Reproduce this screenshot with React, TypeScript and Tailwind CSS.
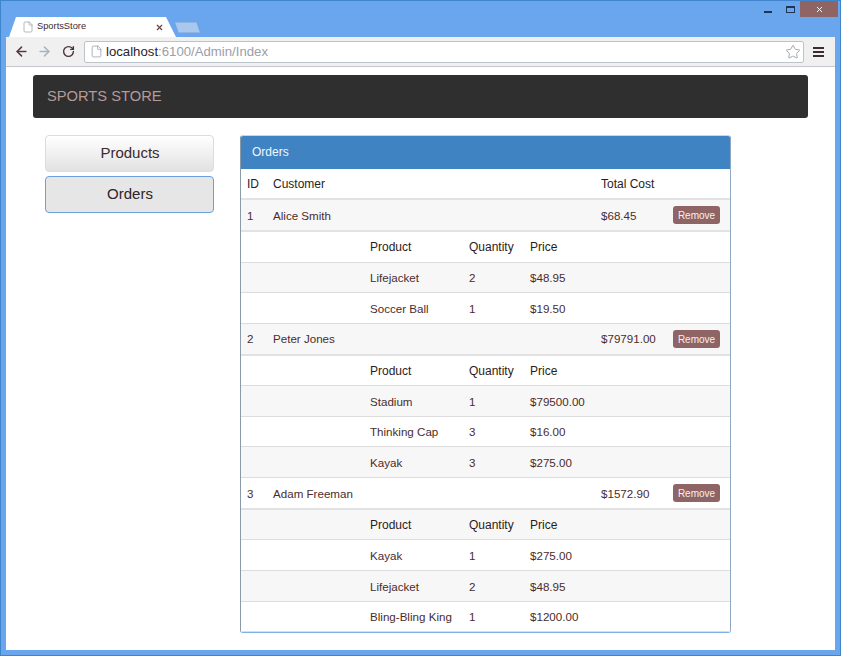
import React from 'react';
import { ArrowLeft, ArrowRight, RotateCw, Star, File, X } from 'lucide-react';

type Item = { name: string; qty: number; price: string };
type Order = { id: number; customer: string; total: string; items: Item[] };

const orders: Order[] = [
    {
        id: 1, customer: 'Alice Smith', total: '$68.45',
        items: [
            { name: 'Lifejacket', qty: 2, price: '$48.95' },
            { name: 'Soccer Ball', qty: 1, price: '$19.50' },
        ],
    },
    {
        id: 2, customer: 'Peter Jones', total: '$79791.00',
        items: [
            { name: 'Stadium', qty: 1, price: '$79500.00' },
            { name: 'Thinking Cap', qty: 3, price: '$16.00' },
            { name: 'Kayak', qty: 3, price: '$275.00' },
        ],
    },
    {
        id: 3, customer: 'Adam Freeman', total: '$1572.90',
        items: [
            { name: 'Kayak', qty: 1, price: '$275.00' },
            { name: 'Lifejacket', qty: 2, price: '$48.95' },
            { name: 'Bling-Bling King', qty: 1, price: '$1200.00' },
        ],
    },
];

const rowGrid = 'grid grid-cols-[32px_97px_99px_61px_71px_72px_1fr] items-center pt-[1px] text-[11.6px] text-[#4a2c2c]';
const headCell = 'text-[12px] text-[#2a1c1c]';
const stripe = (n: number) => (n % 2 === 0 ? 'bg-[#f7f7f7]' : 'bg-white');

const App = () => {
    // rows are striped across the whole table body, nested rows included
    let rowIndex = -1;

    return (
        <div className="w-[841px] h-[656px] flex flex-col bg-[#69a6ee] border border-[#3f85cc] font-['Liberation_Sans',Arial,sans-serif] overflow-hidden">
            {/* Title bar with tab */}
            <div className="relative h-[36px] shrink-0 flex items-end pl-[8px]">
                <div className="relative w-[167px] h-[20px] bg-white rounded-t-[4px] flex items-center pl-[13px] pr-[12px] [clip-path:polygon(0_100%,7px_0,157px_0,100%_100%)]">
                    <File size={12} className="text-[#9aa3ad]" strokeWidth={1.5} />
                    <span className="ml-[3px] flex-1 text-[9.3px] text-[#3a2c2c]">SportsStore</span>
                    <X size={9} className="text-[#6b3a3a]" strokeWidth={3} />
                </div>
                <div className="w-[25px] h-[11px] mb-[4px] -ml-[1px] bg-[#a9c8ee] border border-[#8fb4e4] [clip-path:polygon(0_0,85%_0,100%_100%,15%_100%)]"></div>
                {/* Window controls */}
                <div className="absolute top-[10px] left-[763px] w-[8px] h-[2px] bg-[#1f3554]"></div>
                <div className="absolute top-[5px] left-[785px] w-[9px] h-[7px] border border-[#1f3554] border-t-2 bg-[#69a6ee]"></div>
                <div className="absolute top-0 left-[799px] w-[38px] h-[16px] bg-[#8f6464] flex items-center justify-center">
                    <X size={9} className="text-white" strokeWidth={2.5} />
                </div>
            </div>

            {/* Browser window */}
            <div className="flex-1 mx-[5px] mb-[5px] flex flex-col min-h-0 bg-white">
                <div className="h-[30px] shrink-0 flex items-center bg-[#f0f0f0] border-b border-[#c4c8cc] pl-[8px] pr-[8px]">
                    <ArrowLeft size={15} className="text-[#5a3a40]" strokeWidth={2.5} />
                    <ArrowRight size={15} className="ml-[8px] text-[#a9b4c2]" strokeWidth={2.5} />
                    <RotateCw size={13} className="ml-[10px] text-[#4c3035]" strokeWidth={2.5} />
                    <div className="ml-[9px] h-[22px] w-[720px] flex items-center bg-white border border-[#bcc3c9] rounded-[2px] pl-[5px] pr-[2px]">
                        <File size={13} className="text-[#9aa3ad]" strokeWidth={1.5} />
                        <span className="ml-[3px] flex-1 text-[13.2px] text-[#9aa0a6]"><span className="text-[#2c2226]">localhost</span>:6100/Admin/Index</span>
                        <Star size={16} className="text-[#a4a8ac]" strokeWidth={1.5} />
                    </div>
                    <div className="ml-[9px] w-[11px] flex flex-col gap-[2px]">
                        <div className="h-[2px] bg-[#3a2c30]"></div>
                        <div className="h-[2px] bg-[#3a2c30]"></div>
                        <div className="h-[2px] bg-[#3a2c30]"></div>
                    </div>
                </div>

                {/* Page */}
                <div className="flex-1 min-h-0 px-[27px] pt-[8px]">
                    <div className="w-[775px] h-[43px] flex items-center bg-[#2f2f2f] rounded-[3px] pl-[14px] text-[14.7px] text-[#b59a9a]">
                        SPORTS STORE
                    </div>
                    <div className="mt-[17px] flex items-start">
                        <div className="ml-[12px] w-[169px] flex flex-col gap-[4px]">
                            <div className="h-[37px] pl-[1px] flex items-center justify-center rounded-[4px] border border-[#dcdcdc] bg-linear-to-b from-white to-[#e2e2e2] text-[15px] text-[#3a2a2a]">
                                Products
                            </div>
                            <div className="h-[37px] pl-[1px] flex items-center justify-center rounded-[4px] border border-[#6aa0dc] bg-[#e6e6e6] text-[15px] text-[#2e2428]">
                                Orders
                            </div>
                        </div>
                        <div className="ml-[26px] w-[491px] h-[498px] flex flex-col rounded-[3px] border border-[#c4d6ea] border-l-[#8b9aa8] border-b-[#7fb0e8] border-r-[#8fa8c4] overflow-hidden">
                            <div className="h-[33px] shrink-0 flex items-center bg-[#3f83c3] pl-[11px] pb-[1px] text-[12px] text-[#f2f6fb]">
                                Orders
                            </div>
                            <div className={`${rowGrid} h-[31px] bg-white border-b-2 border-[#e2e2e2]`}>
                                <span className={`${headCell} pl-[6px]`}>ID</span>
                                <span className={headCell}>Customer</span>
                                <span className={`${headCell} col-start-6`}>Total Cost</span>
                            </div>
                            {orders.map((order) => {
                                rowIndex += 1;
                                const orderStripe = stripe(rowIndex);
                                rowIndex += 1;
                                const headStripe = stripe(rowIndex);
                                return (
                                    <React.Fragment key={order.id}>
                                        <div className={`${rowGrid} h-[32px] border-b-2 border-[#e2e2e2] ${orderStripe}`}>
                                            <span className="pl-[6px]">{order.id}</span>
                                            <span>{order.customer}</span>
                                            <span className="col-start-6">{order.total}</span>
                                            <button className="w-[47px] h-[18px] bg-[#8f6464] rounded-[3px] text-[10px] text-[#f6f0f0]">Remove</button>
                                        </div>
                                        <div className={`${rowGrid} h-[30.6px] border-b border-[#dddddd] ${headStripe}`}>
                                            <span className={`${headCell} col-start-3`}>Product</span>
                                            <span className={headCell}>Quantity</span>
                                            <span className={headCell}>Price</span>
                                        </div>
                                        {order.items.map((item) => {
                                            rowIndex += 1;
                                            return (
                                                <div key={item.name} className={`${rowGrid} h-[30.6px] border-b border-[#dddddd] ${stripe(rowIndex)}`}>
                                                    <span className="col-start-3">{item.name}</span>
                                                    <span>{item.qty}</span>
                                                    <span>{item.price}</span>
                                                </div>
                                            );
                                        })}
                                    </React.Fragment>
                                );
                            })}
                        </div>
                    </div>
                </div>
            </div>
        </div>
    );
};

export default App;
